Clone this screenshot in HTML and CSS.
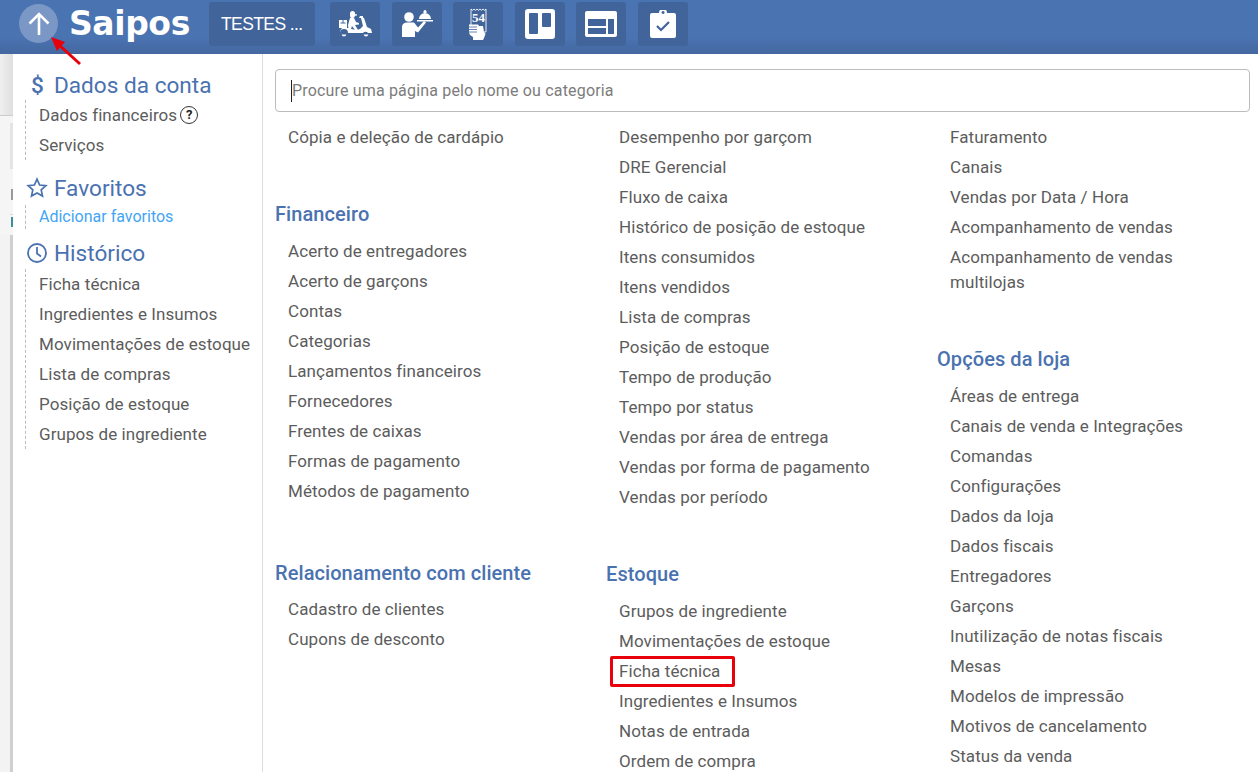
FILE: index.html
```html
<!DOCTYPE html>
<html lang="pt-BR">
<head>
<meta charset="utf-8">
<title>Saipos</title>
<link rel="stylesheet" href="styles.css">
</head>
<body>
<header class="topbar">
  <button class="menu-toggle" aria-label="Recolher menu">
    <svg width="28" height="28" viewBox="0 0 28 28"><path d="M14 25V4M4.500 13.500 14 4l9.500 9.500" fill="none" stroke="#fff" stroke-width="2.600"/></svg>
  </button>
  <span class="logo">Saipos</span>
  <div class="store">TESTES ...</div>
  <nav class="tools">
    <a class="tool">
      <svg width="33" height="26" viewBox="0 0 33 26"><g fill="#fff"><path d="M11 2.500a2.500 2.500 0 0 1 5 0v.5l2 .5v1l-2 .2a2.500 2.500 0 0 1-5-.2z"/><path d="M11 7h4l2 4 3 1v1.500l-4 .5 3 5h-3l-3-4-1 3H9.500l-.5-4z"/><path d="M0 9h8v8H0z"/><path d="M21 5h3v1.500l1 .5 3 9 4 2 1 4H29a3 3 0 0 0-5 0H9a4 4 0 0 0-8 0v-2l2-3h8l1 1 6 1 3-1 3-3-2-8h-2z"/><path d="M5 25.500a2.500 2.500 0 0 1-2.400-2h4.800A2.500 2.500 0 0 1 5 25.500zM27 25.500a2.500 2.500 0 0 1-2.400-2h4.800a2.500 2.500 0 0 1-2.400 2z"/></g><path d="M1.500 12h5M4 9v3" stroke="#41649b" stroke-width="1"/></svg>
    </a>
    <a class="tool">
      <svg width="36" height="36" viewBox="0 0 36 36" fill="#fff"><circle cx="10" cy="11" r="4.800"/><path d="M3 31V21c0-3 2-4.500 5-4.500h7l4 5 6-6.500 2 1.500-8 10-3-1.500V31z"/><path d="M18 14h16v1.500H18zM20 13a6 6 0 0 1 12 0z"/><path d="M24.500 5.500a1.500 1.500 0 1 1 3 0V7h-3z"/></svg>
    </a>
    <a class="tool">
      <svg width="36" height="38" viewBox="0 0 36 38"><path d="M11 4l1.500 1.300L14 4l1.500 1.300L17 4l1.500 1.300L20 4l1.500 1.300L23 4l1.500 1.300L26 4v23H11z" fill="none" stroke="#fff" stroke-width=".9"/><text x="18.500" y="16.500" class="receipt-no">54</text><path d="M9 19.500h9l1 1.500h4l1 6 1.500 2-1.500 4-1 2H13v-3l-3-2-1-2.500z" fill="#fff"/><path d="M9 22h8M9 24.500h8M9 27h8" stroke="#41649b" stroke-width=".8"/></svg>
    </a>
    <a class="tool">
      <svg width="30" height="30" viewBox="0 0 30 30"><path fill-rule="evenodd" d="M3 0h24a3 3 0 0 1 3 3v24a3 3 0 0 1-3 3H3a3 3 0 0 1-3-3V3a3 3 0 0 1 3-3zM5 4a1 1 0 0 0-1 1v19a1 1 0 0 0 1 1h7a1 1 0 0 0 1-1V5a1 1 0 0 0-1-1zM18 4a1 1 0 0 0-1 1v12a1 1 0 0 0 1 1h7a1 1 0 0 0 1-1V5a1 1 0 0 0-1-1z" fill="#fff"/></svg>
    </a>
    <a class="tool">
      <svg width="32" height="26" viewBox="0 0 32 26"><path fill-rule="evenodd" d="M2 0h28a2 2 0 0 1 2 2v22a2 2 0 0 1-2 2H2a2 2 0 0 1-2-2V2a2 2 0 0 1 2-2zM3 8v7h18V8zM3 17v6h18v-6zM23 8v15h6V8z" fill="#fff"/></svg>
    </a>
    <a class="tool">
      <svg width="26" height="28" viewBox="0 0 26 28"><path fill-rule="evenodd" d="M2 3h7a4 4 0 0 1 8 0h7a2 2 0 0 1 2 2v21a2 2 0 0 1-2 2H2a2 2 0 0 1-2-2V5a2 2 0 0 1 2-2zm11-2a1.500 1.500 0 1 0 .1 0z" fill="#fff"/><path d="M7 16l4 4 8-8" fill="none" stroke="#41649b" stroke-width="2.200"/></svg>
    </a>
  </nav>
</header>

<svg class="pointer" width="40" height="36" viewBox="0 0 40 36"><path d="M30 29 8 9" stroke="#e8000b" stroke-width="3"/><path d="M1 2 15 7 7 16z" fill="#e8000b"/></svg>

<div class="page">
  <div class="backdrop">
    <div class="bd-top"></div>
    <div class="bd-card"></div>
    <div class="bd-grey"></div>
    <div class="bd-rule"></div>
    <div class="bd-blue"></div>
    <div class="bd-rest"></div>
  </div>

  <aside class="sidebar">
    <section class="side-group">
      <h2 class="side-title"><span class="side-icon dollar">$</span>Dados da conta</h2>
      <ul class="side-list">
        <li>Dados financeiros<span class="help">?</span></li>
        <li>Serviços</li>
      </ul>
    </section>
    <section class="side-group fav">
      <h2 class="side-title"><span class="side-icon">
        <svg width="22" height="22" viewBox="0 0 22 22"><path d="M11 2.200l2.600 5.800 6.300.7-4.700 4.200 1.300 6.200L11 15.900l-5.500 3.200 1.300-6.200-4.700-4.200 6.300-.7z" fill="none" stroke="#4a72b0" stroke-width="1.700"/></svg>
      </span>Favoritos</h2>
      <ul class="side-list tight">
        <li class="link">Adicionar favoritos</li>
      </ul>
    </section>
    <section class="side-group hist">
      <h2 class="side-title"><span class="side-icon">
        <svg width="22" height="22" viewBox="0 0 22 22"><circle cx="11" cy="11" r="9" fill="none" stroke="#4a72b0" stroke-width="1.800"/><path d="M11 5v6.500l4 3" fill="none" stroke="#4a72b0" stroke-width="1.800"/></svg>
      </span>Histórico</h2>
      <ul class="side-list">
        <li>Ficha técnica</li>
        <li>Ingredientes e Insumos</li>
        <li>Movimentações de estoque</li>
        <li>Lista de compras</li>
        <li>Posição de estoque</li>
        <li>Grupos de ingrediente</li>
      </ul>
    </section>
  </aside>

  <main class="content">
    <div class="search"><span class="caret"></span><input class="search-input" type="text" placeholder="Procure uma página pelo nome ou categoria"></div>
    <div class="columns">
      <div class="column">
        <ul class="items">
          <li>Cópia e deleção de cardápio</li>
        </ul>
        <h3 class="cat">Financeiro</h3>
        <ul class="items">
          <li>Acerto de entregadores</li>
          <li>Acerto de garçons</li>
          <li>Contas</li>
          <li>Categorias</li>
          <li>Lançamentos financeiros</li>
          <li>Fornecedores</li>
          <li>Frentes de caixas</li>
          <li>Formas de pagamento</li>
          <li>Métodos de pagamento</li>
        </ul>
        <h3 class="cat cat-low">Relacionamento com cliente</h3>
        <ul class="items">
          <li>Cadastro de clientes</li>
          <li>Cupons de desconto</li>
        </ul>
      </div>
      <div class="column">
        <ul class="items">
          <li>Desempenho por garçom</li>
          <li>DRE Gerencial</li>
          <li>Fluxo de caixa</li>
          <li>Histórico de posição de estoque</li>
          <li>Itens consumidos</li>
          <li>Itens vendidos</li>
          <li>Lista de compras</li>
          <li>Posição de estoque</li>
          <li>Tempo de produção</li>
          <li>Tempo por status</li>
          <li>Vendas por área de entrega</li>
          <li>Vendas por forma de pagamento</li>
          <li>Vendas por período</li>
        </ul>
        <h3 class="cat">Estoque</h3>
        <ul class="items">
          <li>Grupos de ingrediente</li>
          <li>Movimentações de estoque</li>
          <li class="marked">Ficha técnica</li>
          <li>Ingredientes e Insumos</li>
          <li>Notas de entrada</li>
          <li>Ordem de compra</li>
        </ul>
      </div>
      <div class="column">
        <ul class="items">
          <li>Faturamento</li>
          <li>Canais</li>
          <li>Vendas por Data / Hora</li>
          <li>Acompanhamento de vendas</li>
          <li>Acompanhamento de vendas multilojas</li>
        </ul>
        <h3 class="cat">Opções da loja</h3>
        <ul class="items">
          <li>Áreas de entrega</li>
          <li>Canais de venda e Integrações</li>
          <li>Comandas</li>
          <li>Configurações</li>
          <li>Dados da loja</li>
          <li>Dados fiscais</li>
          <li>Entregadores</li>
          <li>Garçons</li>
          <li>Inutilização de notas fiscais</li>
          <li>Mesas</li>
          <li>Modelos de impressão</li>
          <li>Motivos de cancelamento</li>
          <li>Status da venda</li>
        </ul>
      </div>
    </div>
  </main>
</div>
```

FILE: styles.css
```css
* { box-sizing: border-box; }
html, body { margin: 0; height: 100%; overflow: hidden; }
body { width: 1258px; height: 772px; font-family: Roboto, "Liberation Sans", sans-serif; color: #5c5c5c; background: #fff; position: relative; }
ul { list-style: none; margin: 0; padding: 0; }
h2, h3 { margin: 0; font-weight: 400; }

.topbar { height: 54px; display: flex; align-items: flex-start; padding-top: 2px; padding-left: 19px; background: linear-gradient(#4a73b1 0, #4a73b1 70%, #44679f 100%); }
.menu-toggle { width: 39px; height: 39px; margin-top: 2px; padding: 0; border: 0; border-radius: 50%; background: #7a97c5; display: flex; align-items: center; justify-content: center; flex: none; }
.logo { width: 151px; padding-left: 11px; flex: none; font-family: "DejaVu Sans", sans-serif; font-weight: 700; font-size: 33px; letter-spacing: -0.4px; line-height: 44px; color: #fff; }
.store { width: 106px; height: 44px; flex: none; border-radius: 3px; background: #41649b; color: #fff; font-family: "Liberation Sans", sans-serif; font-size: 17.500px; letter-spacing: -0.6px; line-height: 44px; padding-left: 12px; }
.tools { display: flex; gap: 11.500px; margin-left: 15px; }
.tool { width: 50px; height: 44px; border-radius: 3px; background: #41649b; display: flex; align-items: center; justify-content: center; }
.receipt-no { font-family: "Liberation Serif", serif; font-weight: 700; font-size: 13px; fill: #fff; text-anchor: middle; }

.pointer { position: absolute; left: 50px; top: 35px; z-index: 3; }

.page { display: flex; height: 718px; }
.backdrop { width: 13px; flex: none; display: flex; flex-direction: column; background: #f5f5f5; }
.bd-top { height: 62px; background: linear-gradient(90deg, #f0f0f0, #dedede); border-bottom: 1px solid #ccc; }
.bd-card { height: 46px; margin: 7px 0 0 10px; background: #e4e4e4; }
.bd-grey { height: 11px; margin: 20px 0 0 11px; background: #9a9a9a; }
.bd-rule { height: 1px; margin: 14px 0 0 10px; background: #ddd; }
.bd-blue { height: 10px; margin: 2px 0 0 11px; background: #3b8f9f; }
.bd-rest { flex: 1; margin-top: 8px; background: linear-gradient(90deg, #f3f3f3 0, #f3f3f3 10px, #cfcfcf 10px); }

.sidebar { width: 250px; flex: none; background: #fff; border-right: 1px solid #ddd; padding: 18px 0 0 12px; }
.side-title { display: flex; align-items: center; height: 26px; font-size: 22.600px; color: #4a72b0; }
.side-icon { width: 29px; flex: none; display: flex; }
.side-icon svg { margin-left: 1px; }
.dollar { padding-left: 6px; font-weight: 500; }
.side-group.fav { margin-top: 15px; }
.side-group.hist { margin-top: 11px; }
.side-list { border-left: 1px dashed #bbb; margin-top: 2px; padding-left: 13px; }
.fav .side-list { margin-top: 4px; }
.hist .side-list { margin-top: 3px; }
.side-list li { height: 30px; font-size: 17px; letter-spacing: 0.08px; line-height: 30px; white-space: nowrap; display: flex; align-items: center; }
.side-list.tight li { height: 24px; line-height: 24px; font-size: 16px; letter-spacing: 0; }
.link { color: #42a5f5; }
.help { width: 18px; height: 18px; margin-left: 3px; border: 1.500px solid #333; border-radius: 50%; font-size: 13px; font-weight: 700; color: #222; line-height: 15px; text-align: center; }

.content { flex: 1; min-width: 0; padding: 15px 8px 0 12px; }
.search { height: 43px; display: flex; align-items: center; padding-left: 15px; border: 1px solid #bbb; border-radius: 4px; background: #fff; }
.caret { width: 1px; height: 22px; background: #222; flex: none; }
.search-input { flex: 1; border: 0; outline: 0; padding: 0; font-family: inherit; font-size: 16px; letter-spacing: 0.17px; color: #555; background: transparent; }
.search-input::placeholder { color: #7c7c7c; opacity: 1; }

.columns { display: flex; padding-top: 10px; }
.column { width: 331px; flex: none; }
.items li { padding: 2.500px 0 2.500px 13px; max-width: 290px; font-size: 17px; letter-spacing: 0.08px; line-height: 25px; position: relative; }
.cat { margin: 50px 0 10px; height: 24px; font-size: 20px; letter-spacing: 0.08px; line-height: 24px; font-weight: 500; color: #4a72b0; }
.cat-low { margin: 55px 0 9px; }
.marked::after { content: ""; position: absolute; left: 4px; top: 0; width: 125px; height: 31px; box-sizing: border-box; border: 3px solid #e8000b; border-radius: 2px; }
```
